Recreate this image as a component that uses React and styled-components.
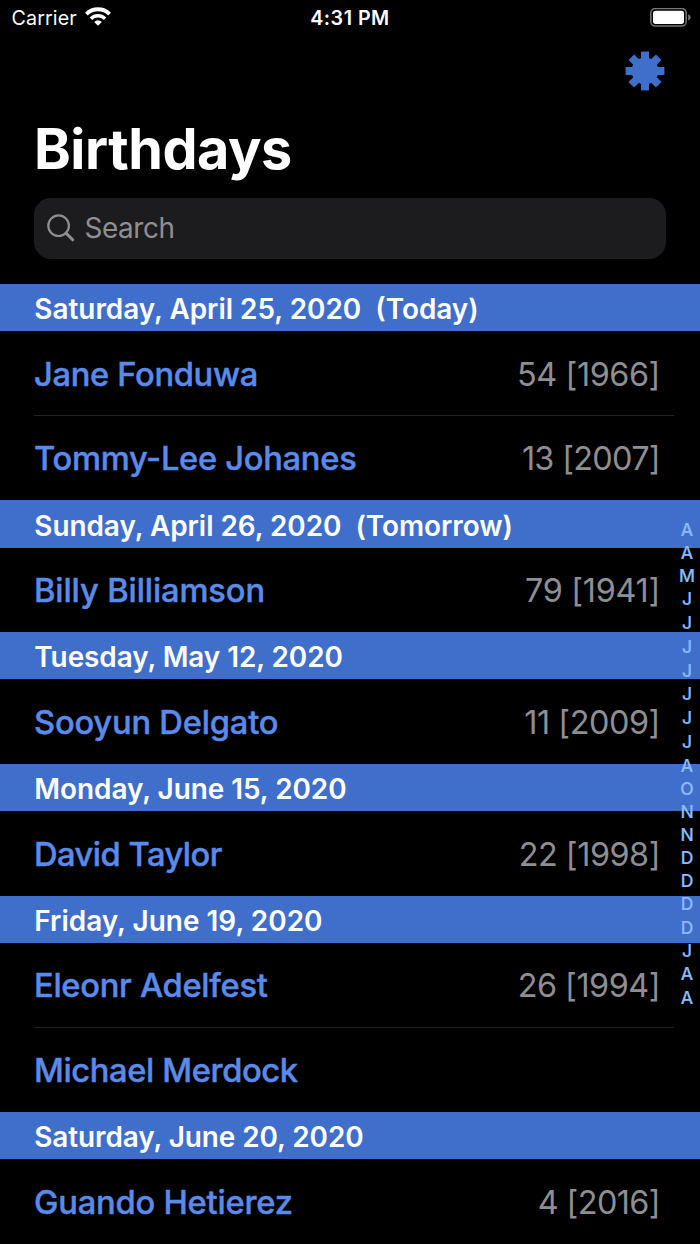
import React from "react";
import styled, { createGlobalStyle } from "styled-components";

const Global = createGlobalStyle`
  *, *::before, *::after { box-sizing: border-box; }
  html, body { margin: 0; background: #000; }
  body { font-family: Inter, "Noto Sans", sans-serif; overflow: hidden; }
`;

const Screen = styled.div`
  position: relative;
  width: 700px;
  height: 1244px;
  overflow: hidden;
  background: #000;
  color: #fff;
`;

const StatusBar = styled.header`
  display: grid;
  grid-template-columns: 1fr auto 1fr;
  align-items: center;
  height: 36px;
  padding: 0 9px 0 11.5px;
`;

const Carrier = styled.div`
  display: flex;
  align-items: center;
  gap: 8px;
  height: 24px;
  font-size: 19.7px;
  letter-spacing: 0.1px;
`;

const Clock = styled.time`
  margin-right: 2.5px;
  font-size: 19.7px;
  font-weight: 600;
  letter-spacing: 0.5px;
`;

const BatterySlot = styled.div`
  display: flex;
  justify-content: flex-end;
`;

const NavBar = styled.nav`
  display: flex;
  justify-content: flex-end;
  height: 70px;
  padding: 15px 35px 0 0;
`;

const IconButton = styled.button`
  display: block;
  width: 40px;
  height: 40px;
  padding: 0;
  border: 0;
  background: none;
`;

const Title = styled.h1`
  margin: 0;
  padding: 8px 0 0 34px;
  height: 92px;
  font-size: 55.7px;
  line-height: 70px;
  font-weight: 700;
  letter-spacing: -0.49px;
`;

const SearchField = styled.div`
  display: flex;
  align-items: center;
  gap: 9.5px;
  height: 61px;
  margin: 0 34px 25.1px;
  padding: 0 0 2px 13px;
  border-radius: 17px;
  background: #1c1c1e;
  color: #8e8e93;
  font-size: 27.9px;
  letter-spacing: -0.41px;
`;

const Section = styled.section`
  display: flex;
  flex-direction: column;
`;

const SectionHeader = styled.h2`
  display: flex;
  align-items: center;
  height: 47.3px;
  margin: 0;
  padding: 3px 0 0 34.3px;
  background: #406ecb;
  font-size: 27.9px;
  font-weight: 600;
  line-height: 34px;
  letter-spacing: ${(p) => p.$tracking}px;
  white-space: pre;
`;

const Row = styled.div`
  display: flex;
  align-items: center;
  justify-content: space-between;
  height: 84.5px;
  margin: 0 26px 0 34px;
  padding: 1px 14px 0 0;
  border-bottom: 1px solid ${(p) => (p.$divided ? "#222224" : "transparent")};
  line-height: 40px;
  white-space: pre;
`;

const Name = styled.span`
  color: #5a8aea;
  font-size: 32.7px;
  font-weight: 500;
  -webkit-text-stroke: 0.45px #5a8aea;
  letter-spacing: ${(p) => p.$tracking}px;
`;

const Age = styled.span`
  padding-top: 2px;
  color: #8e8e93;
  font-size: 32.4px;
  letter-spacing: ${(p) => p.$tracking}px;
`;

const IndexBar = styled.ol`
  position: absolute;
  top: 518px;
  right: 0;
  width: 26px;
  margin: 0;
  padding: 0;
  list-style: none;
  text-align: center;
  color: #8abaff;
  font-size: 17.5px;
  font-weight: 500;
  -webkit-text-stroke: 0.2px #8abaff;
`;

const IndexLetter = styled.li`
  height: ${(p) => (p.$letter === "J" ? 23.8 : 23.1)}px;
  line-height: 23px;
`;

const sections = [
  {
    title: "Saturday, April 25, 2020\u00a0 (Today)",
    tracking: 0,
    people: [
      { name: "Jane Fonduwa", tracking: -0.34, age: "54 [1966]", ageTracking: -0.43 },
      { name: "Tommy-Lee Johanes", tracking: -0.3, age: "13 [2007]", ageTracking: -0.68 },
    ],
  },
  {
    title: "Sunday, April 26, 2020\u00a0 (Tomorrow)",
    tracking: -0.03,
    people: [{ name: "Billy Billiamson", tracking: -0.12, age: "79 [1941]", ageTracking: -0.28 }],
  },
  {
    title: "Tuesday, May 12, 2020",
    tracking: -0.05,
    people: [{ name: "Sooyun Delgato", tracking: -0.21, age: "11 [2009]", ageTracking: -0.44 }],
  },
  {
    title: "Monday, June 15, 2020",
    tracking: -0.02,
    people: [{ name: "David Taylor", tracking: -0.52, age: "22 [1998]", ageTracking: -0.48 }],
  },
  {
    title: "Friday, June 19, 2020",
    tracking: 0.03,
    people: [
      { name: "Eleonr Adelfest", tracking: -0.29, age: "26 [1994]", ageTracking: -0.5 },
      { name: "Michael Merdock", tracking: -0.38 },
    ],
  },
  {
    title: "Saturday, June 20, 2020",
    tracking: -0.07,
    people: [{ name: "Guando Hetierez", tracking: -0.22, age: "4 [2016]", ageTracking: -0.61 }],
  },
];

const indexLetters = [..."AAMJJJJJJJAONNDDDDJAA"];

const WifiIcon = () => (
  <svg width="26" height="22" viewBox="0 0 26 22" fill="#fff">
    <path d="M13 18.7 9.18 14.88A5.4 5.4 0 0 1 16.82 14.88Z" />
    <g fill="none" stroke="#fff">
      <path d="M5.96 11.66A9.95 9.95 0 0 1 20.04 11.66" strokeWidth="3.5" />
      <path d="M1.4 7.1A16.4 16.4 0 0 1 24.6 7.1" strokeWidth="4" />
    </g>
  </svg>
);

const BatteryIcon = () => (
  <svg width="41" height="20" viewBox="0 0 41 20">
    <rect x="0.8" y="0.5" width="35.4" height="17.6" rx="4.6" fill="none" stroke="#77777a" strokeWidth="1.5" />
    <rect x="3" y="2.7" width="31" height="13.2" rx="2.6" fill="#fff" />
    <path d="M38.2 6.2Q40.6 7 40.6 9.3T38.2 12.4Z" fill="#77777a" />
  </svg>
);

const GearIcon = () => (
  <svg width="40" height="40" viewBox="-20 -20 40 40" fill="#406ecb">
    <circle r="13.4" />
    {[0, 45, 90, 135].map((angle) => (
      <rect key={angle} x="-4" y="-19.4" width="8" height="38.8" transform={`rotate(${angle})`} />
    ))}
  </svg>
);

const SearchIcon = () => (
  <svg width="28" height="28" viewBox="0 0 28 28" fill="none" stroke="#8e8e93">
    <circle cx="11.6" cy="11.7" r="10.3" strokeWidth="2.2" />
    <path d="M19 19.1 25.7 25.8" strokeWidth="3" strokeLinecap="round" />
  </svg>
);

export default function App() {
  return (
    <Screen>
      <Global />
      <StatusBar>
        <Carrier>
          Carrier
          <WifiIcon />
        </Carrier>
        <Clock>4:31 PM</Clock>
        <BatterySlot>
          <BatteryIcon />
        </BatterySlot>
      </StatusBar>
      <NavBar>
        <IconButton aria-label="Settings">
          <GearIcon />
        </IconButton>
      </NavBar>
      <Title>Birthdays</Title>
      <SearchField>
        <SearchIcon />
        Search
      </SearchField>
      <main>
        {sections.map((section) => (
          <Section key={section.title}>
            <SectionHeader $tracking={section.tracking}>{section.title}</SectionHeader>
            {section.people.map((person, i) => (
              <Row key={person.name} $divided={i < section.people.length - 1}>
                <Name $tracking={person.tracking}>{person.name}</Name>
                {person.age && <Age $tracking={person.ageTracking}>{person.age}</Age>}
              </Row>
            ))}
          </Section>
        ))}
      </main>
      <IndexBar>
        {indexLetters.map((letter, i) => (
          <IndexLetter key={i} $letter={letter}>
            {letter}
          </IndexLetter>
        ))}
      </IndexBar>
    </Screen>
  );
}
